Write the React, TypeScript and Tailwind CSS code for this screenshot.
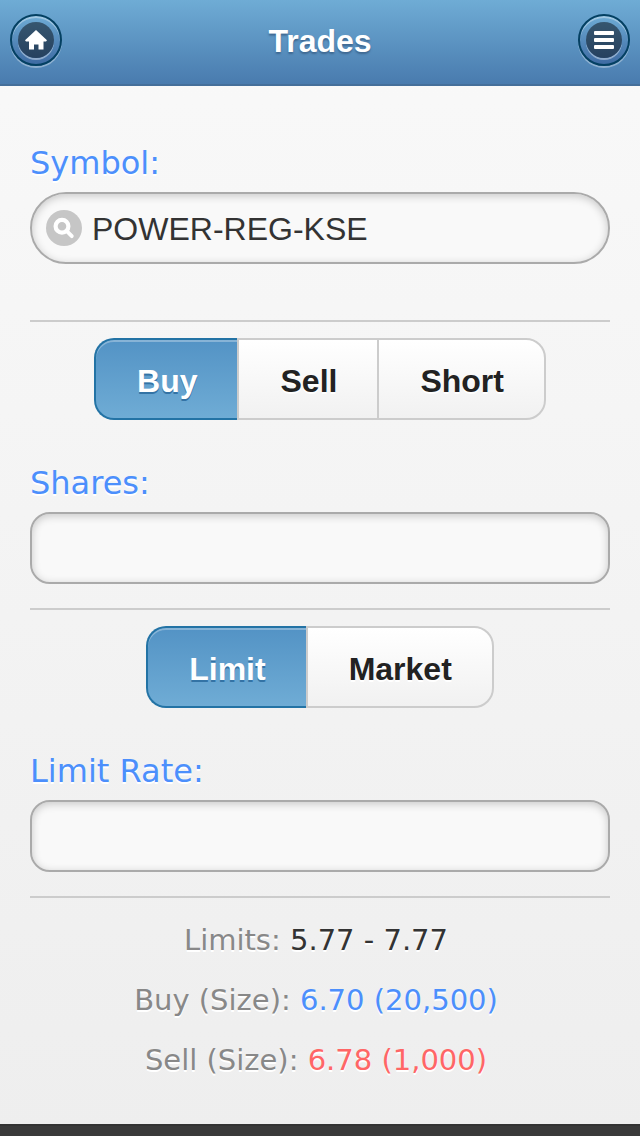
import { useState } from "react";
import type { ReactNode } from "react";

function RoundButton({ label, children }: { label: string; children: ReactNode }) {
  return (
    <button
      type="button"
      aria-label={label}
      className="flex size-[52px] items-center justify-center rounded-full border-2 border-[#044062] bg-linear-to-b from-[#6facd5] to-[#3e6ba3] shadow-[0_2px_0_rgba(255,255,255,0.35),inset_0_2px_0_rgba(255,255,255,0.35)]"
    >
      <span className="flex size-9 items-center justify-center rounded-full bg-linear-to-b from-[#36566f] to-[#26415f] shadow-[0_2px_0_rgba(255,255,255,0.4)]">
        {children}
      </span>
    </button>
  );
}

function Segmented({
  legend,
  name,
  options,
}: {
  legend: string;
  name: string;
  options: string[];
}) {
  const [value, setValue] = useState(options[0]);
  return (
    <fieldset aria-label={legend} className="mt-4 flex justify-center">
      {options.map((option) => (
        <label
          key={option}
          className="relative flex h-[82px] cursor-pointer items-center border-y-2 border-l-2 border-[#ccc] bg-linear-to-b from-white to-[#f1f1f1] pt-1 pr-10 pl-[41px] font-['Liberation_Sans',Arial,sans-serif] text-[32px] leading-10 font-bold text-[#222] [text-shadow:0_2px_0_#fff] first-of-type:rounded-l-[20px] last-of-type:rounded-r-[20px] last-of-type:border-r-2 has-checked:border-[#2373a5] has-checked:from-[#5393c5] has-checked:to-[#6facd5] has-checked:text-white has-checked:shadow-[inset_0_2px_0_rgba(255,255,255,0.3)] has-checked:[text-shadow:0_2px_0_#3373a5]"
        >
          <input
            type="radio"
            name={name}
            value={option}
            checked={value === option}
            onChange={() => setValue(option)}
            className="sr-only"
          />
          {option}
        </label>
      ))}
    </fieldset>
  );
}

function Field({ id, label }: { id: string; label: string }) {
  return (
    <>
      <label htmlFor={id} className="block text-[32px] leading-[46px] text-[#4c8ffc]">
        {label}
      </label>
      <input
        id={id}
        type="text"
        inputMode="decimal"
        className="mt-[6px] block h-[72px] w-full rounded-[20px] border-2 border-[#aaa] bg-[#f9f9f9] px-4 font-['Liberation_Sans',Arial,sans-serif] text-[32px] text-[#333] shadow-[inset_0_2px_8px_rgba(0,0,0,0.2)]"
      />
    </>
  );
}

function Quote({ label, value, color }: { label: string; value: string; color: string }) {
  return (
    <p className="text-[29px] leading-[60px] text-[#888]">
      {label} <span className={color}>{value}</span>
    </p>
  );
}

export default function App() {
  const [symbol, setSymbol] = useState("POWER-REG-KSE");
  return (
    <div className="flex min-h-screen flex-col bg-linear-to-b from-[#f9f9f9] to-[#eee] font-['DejaVu_Sans',Verdana,sans-serif] [text-shadow:0_2px_0_#fff]">
      <header className="flex h-[86px] items-start justify-between border-b-2 border-[#456f9a] bg-linear-to-b from-[#6facd5] to-[#497bae] px-[10px] pt-[14px]">
        <RoundButton label="Home">
          <svg viewBox="0 0 22 20" className="h-5 w-[22px]" fill="#fff" aria-hidden="true">
            <path d="M11 0 22 10.3 21 11.5H18.5V19.5H13.5V14.5H9V19.5H4V11.5H1L0 10.3Z" />
          </svg>
        </RoundButton>
        <h1 className="mt-[7px] font-['Liberation_Sans',Arial,sans-serif] text-[32px] leading-10 font-bold text-white [text-shadow:0_2px_2px_#3e6790]">
          Trades
        </h1>
        <RoundButton label="Menu">
          <svg viewBox="0 0 20 18" className="h-[18px] w-5" fill="#fff" aria-hidden="true">
            <rect width="20" height="4" rx="1" />
            <rect y="7" width="20" height="4" rx="1" />
            <rect y="14" width="20" height="4" rx="1" />
          </svg>
        </RoundButton>
      </header>

      <main className="flex-1 px-[30px] pt-[54px]">
        <label htmlFor="symbol" className="block text-[32px] leading-[46px] text-[#4c8ffc]">
          Symbol:
        </label>
        <div className="mt-[6px] flex h-[72px] items-center gap-[10px] rounded-full border-2 border-[#aaa] bg-[#f9f9f9] px-[14px] shadow-[inset_0_2px_8px_rgba(0,0,0,0.2)]">
          <svg viewBox="0 0 36 36" className="size-9 shrink-0" fill="none" aria-hidden="true">
            <circle cx="18" cy="18" r="18" fill="#c6c6c6" />
            <circle cx="16" cy="16.3" r="6.4" stroke="#fff" strokeWidth="4.2" />
            <path d="m20.8 21.2 5 5" stroke="#fff" strokeWidth="3.8" strokeLinecap="round" />
          </svg>
          <input
            id="symbol"
            type="text"
            value={symbol}
            onChange={(event) => setSymbol(event.target.value)}
            className="h-full min-w-0 flex-1 bg-transparent pt-[2px] font-['Liberation_Sans',Arial,sans-serif] text-[32px] text-[#333] outline-none [text-shadow:none]"
          />
        </div>

        <hr className="mt-14 border-t-2 border-[#ccc]" />
        <Segmented legend="Order side" name="side" options={["Buy", "Sell", "Short"]} />
        <div className="mt-10">
          <Field id="shares" label="Shares:" />
        </div>

        <hr className="mt-6 border-t-2 border-[#ccc]" />
        <Segmented legend="Order type" name="type" options={["Limit", "Market"]} />
        <div className="mt-10">
          <Field id="limit-rate" label="Limit Rate:" />
        </div>

        <hr className="mt-6 border-t-2 border-[#ccc]" />
        <section aria-label="Quote" className="mt-3 pr-2 text-center">
          <Quote label="Limits:" value="5.77 - 7.77" color="text-[#333]" />
          <Quote label="Buy (Size):" value="6.70 (20,500)" color="text-[#4c8ffc]" />
          <Quote label="Sell (Size):" value="6.78 (1,000)" color="text-[#ff6666]" />
        </section>
      </main>

      <footer className="h-3 border-t-2 border-[#333] bg-[#3a3a3a]" />
    </div>
  );
}
